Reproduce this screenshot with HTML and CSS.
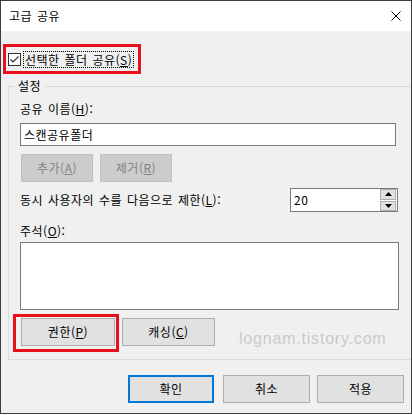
FILE: index.html
```html
<!DOCTYPE html>
<html lang="ko">
<head>
<meta charset="utf-8">
<title>고급 공유</title>
<link rel="stylesheet" href="styles.css">
</head>
<body>
<div class="window">
  <div class="titlebar">
    <span class="title">고급 공유</span>
    <svg class="close" width="10" height="10" viewBox="0 0 10 10"><path d="M0.5 0.5 L9.5 9.5 M9.5 0.5 L0.5 9.5" stroke="#000" stroke-width="1" fill="none"/></svg>
  </div>
  <div class="content">
    <div class="share-row">
      <span class="checkbox"><svg width="11" height="11" viewBox="0 0 11 11"><polyline points="1.5,5.5 4,8 9.5,2.5" fill="none" stroke="#333" stroke-width="1.2"/></svg></span>
      <span class="focus">선택한 폴더 공유(<u>S</u>)</span>
    </div>
    <div class="group">
      <span class="legend">설정</span>
      <div class="label first">공유 이름(<u>H</u>):</div>
      <div class="input">스캔공유폴더</div>
      <div class="btn-row">
        <span class="btn disabled w72">추가(<u>A</u>)</span>
        <span class="btn disabled w72">제거(<u>R</u>)</span>
      </div>
      <div class="limit-row">
        <span class="label">동시 사용자의 수를 다음으로 제한(<u>L</u>):</span>
        <div class="spin">
          <span class="spin-text">20</span>
          <span class="spin-btns">
            <span class="spin-btn"><svg width="7" height="4" viewBox="0 0 7 4"><path d="M3.5 0 L7 4 L0 4 Z" fill="#000"/></svg></span>
            <span class="spin-btn"><svg width="7" height="4" viewBox="0 0 7 4"><path d="M0 0 L7 0 L3.5 4 Z" fill="#000"/></svg></span>
          </span>
        </div>
      </div>
      <div class="label second">주석(<u>O</u>):</div>
      <div class="textarea"></div>
      <div class="btn-row last">
        <span class="btn w94">권한(<u>P</u>)</span>
        <span class="btn w93">캐싱(<u>C</u>)</span>
      </div>
      <span class="watermark">lognam.tistory.com</span>
    </div>
    <div class="footer">
      <span class="btn default">확인</span>
      <span class="btn f2">취소</span>
      <span class="btn f3">적용</span>
    </div>
  </div>
  <div class="hl hl-share"></div>
  <div class="hl hl-perm"></div>
</div>
</body>
</html>
```

FILE: styles.css
```css
html, body {
  margin: 0;
  padding: 0;
  background: #ffffff;
}
body {
  font-family: "Noto Sans CJK KR", "Noto Sans", sans-serif;
  font-size: 12px;
  line-height: 16px;
  letter-spacing: 0.5px;
  word-spacing: 1px;
  color: #000;
}
u {
  text-decoration: underline;
  text-underline-offset: 1px;
}
.window {
  position: relative;
  width: 410px;
  height: 412px;
  border: 1px solid #3c3c3c;
  background: #f0f0f0;
  overflow: hidden;
}
.titlebar {
  height: 30px;
  background: #ffffff;
  display: flex;
  align-items: center;
  justify-content: space-between;
  padding: 0 10px 0 8px;
}
.title {
  font-size: 12px;
  line-height: 16px;
}
.close {
  display: block;
  margin-top: -1px;
}
.content {
  display: flex;
  flex-direction: column;
}
.share-row {
  display: flex;
  align-items: center;
  height: 17px;
  margin: 20px 0 0 7px;
}
.checkbox {
  width: 11px;
  height: 11px;
  border: 1px solid #333333;
  background: #ffffff;
  display: flex;
}
.focus {
  margin-left: 2px;
  height: 15px;
  line-height: 15px;
  border: 1px dotted #000;
  padding: 0 1px;
  white-space: nowrap;
}
.group {
  position: relative;
  margin: 18px 0 0 7px;
  width: 395px;
  height: 272px;
  border: 1px solid #dcdcdc;
  padding: 0 0 0 11px;
  box-sizing: content-box;
  display: flex;
  flex-direction: column;
}
.legend {
  position: absolute;
  left: 6px;
  top: -9px;
  padding: 0 3px;
  background: #f0f0f0;
}
.label {
  white-space: nowrap;
}
.label.first {
  margin-top: 14px;
}
.label.second {
  margin-top: 11px;
}
.input {
  margin-top: 6px;
  width: 371px;
  height: 21px;
  border: 1px solid #7a7a7a;
  background: #fff;
  padding: 0 0 0 3px;
  line-height: 21px;
}
.btn-row {
  display: flex;
  gap: 7px;
  margin-top: 8px;
  margin-left: 1px;
}
.btn-row.last {
  margin-top: 8px;
  margin-left: 1px;
}
.btn {
  box-sizing: border-box;
  height: 28px;
  border: 1px solid #adadad;
  background: #e1e1e1;
  display: flex;
  align-items: center;
  justify-content: center;
  white-space: nowrap;
}
.btn.disabled {
  background: #cccccc;
  border-color: #bfbfbf;
  color: #838383;
}
.w72 { width: 72px; }
.w94 { width: 94px; }
.w93 { width: 93px; }
.limit-row {
  display: flex;
  align-items: center;
  justify-content: space-between;
  margin-top: 6px;
  width: 378px;
}
.spin {
  display: flex;
  width: 106px;
  height: 22px;
  border: 1px solid #7a7a7a;
  background: #fff;
}
.spin-text {
  flex: 1;
  padding-left: 3px;
  line-height: 22px;
}
.spin-btns {
  display: flex;
  flex-direction: column;
  gap: 1px;
  padding: 0 1px 0 0;
  width: 16px;
}
.spin-btn {
  box-sizing: border-box;
  height: 10.5px;
  border: 1px solid #adadad;
  background: #e1e1e1;
  display: flex;
  align-items: center;
  justify-content: center;
}
.textarea {
  margin-top: 3px;
  width: 377px;
  height: 66px;
  border: 1px solid #7a7a7a;
  background: #fff;
}
.watermark {
  position: absolute;
  left: 230px;
  top: 243px;
  font-family: "Liberation Sans", Arial, sans-serif;
  font-size: 16px;
  line-height: 18px;
  color: #cacaca;
  letter-spacing: 0.8px;
  word-spacing: 0;
  white-space: nowrap;
}
.footer {
  display: flex;
  margin: 15px 0 0 127px;
}
.footer .btn {
  width: 86px;
}
.btn.default {
  border: 2px solid #0078d7;
}
.btn.f2 { margin-left: 9px; width: 87px; }
.btn.f3 { margin-left: 7px; width: 87px; }
.hl {
  position: absolute;
  border: 3px solid #e8101a;
  box-sizing: border-box;
}
.hl-share {
  left: 2px;
  top: 43px;
  width: 138px;
  height: 30px;
}
.hl-perm {
  left: 12px;
  top: 313px;
  width: 106px;
  height: 38px;
}
```
